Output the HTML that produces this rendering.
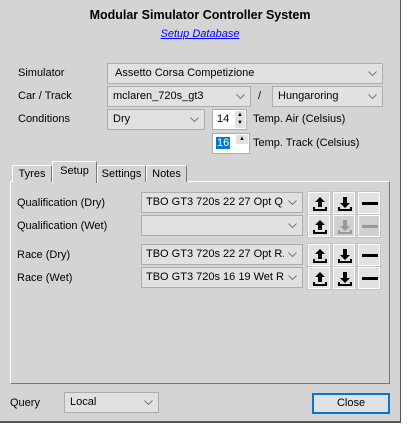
<!DOCTYPE html>
<html><head><style>
body{margin:0;width:407px;height:424px;background:#fff;font-family:"Liberation Sans",Arial,sans-serif;font-size:11px;color:#000;position:relative;overflow:hidden}
.win{position:absolute;left:0;top:0;width:400px;height:421px;background:#d4d4d4;border-right:1px solid #555;border-bottom:2px solid #555}
.a{position:absolute}
.cb{position:absolute;background:#e1e1e1;border:1px solid #adadad;box-sizing:border-box;padding-left:6px;line-height:19px;white-space:nowrap;overflow:hidden}
.cb .t{position:absolute;left:4px;right:18px;top:0;overflow:hidden}
.cb svg{position:absolute;right:5px;top:7px}
.lbl{position:absolute;white-space:nowrap}
.btn{position:absolute;width:22px;height:22px;background:#e1e1e1;border:1px solid #fff;box-sizing:border-box;outline:1px solid #c4c4c4}
.tab{position:absolute;top:163px;height:19px;background:#d4d4d4;border:1px solid #fff;border-right-color:#777;border-bottom:none;box-sizing:border-box;line-height:17px;text-align:center}
</style></head><body>
<svg width="0" height="0" style="position:absolute"><defs>
<g id="ch"><path d="M0.5 0.5l4 4 4-4" fill="none" stroke="#777" stroke-width="1"/></g>
<g id="up"><path d="M5 14v3h12v-3" fill="none" stroke="currentColor" stroke-width="2"/><path d="M11 4l-5 5h3v5h4V9h3z" fill="currentColor"/></g>
<g id="dn"><path d="M5 14v3h12v-3" fill="none" stroke="currentColor" stroke-width="2"/><path d="M11 15l-5-5h3V4h4v6h3z" fill="currentColor"/></g>
<g id="mi"><rect x="3" y="9" width="16" height="3" fill="currentColor"/></g>
</defs></svg>
<div class="win">
<div class="lbl" style="left:0;width:400px;text-align:center;top:8px;font-weight:bold;font-size:12.5px">Modular Simulator Controller System</div>
<div class="lbl" style="left:0;width:400px;text-align:center;top:28px;color:#00f;font-style:italic;text-decoration:underline">Setup Database</div>

<div class="lbl" style="left:18px;top:67px">Simulator</div>
<div class="cb" style="left:107px;top:63px;width:276px;height:21px"><span class="t" style="left:7px">Assetto Corsa Competizione</span><svg width="9" height="6"><use href="#ch"/></svg></div>
<div class="lbl" style="left:18px;top:90px">Car / Track</div>
<div class="cb" style="left:107px;top:86px;width:144px;height:21px"><span class="t" style="left:5px">mclaren_720s_gt3</span><svg width="9" height="6"><use href="#ch"/></svg></div>
<div class="lbl" style="left:258px;top:90px">/</div>
<div class="cb" style="left:272px;top:86px;width:111px;height:21px"><span class="t" style="left:5px">Hungaroring</span><svg width="9" height="6"><use href="#ch"/></svg></div>
<div class="lbl" style="left:18px;top:113px">Conditions</div>
<div class="cb" style="left:107px;top:109px;width:98px;height:21px"><span class="t" style="left:5px">Dry</span><svg width="9" height="6"><use href="#ch"/></svg></div>
<div class="a" style="left:212px;top:109px;width:35px;height:21px;background:#fff;border:1px solid #adadad;box-sizing:border-box"><span class="a" style="left:4px;top:3px">14</span><div class="a" style="left:22px;top:1px;width:10px;height:17px;background:#e1e1e1;font-size:6px;line-height:8px;text-align:center">▲<br>▼</div></div>
<div class="lbl" style="left:253px;top:113px">Temp. Air (Celsius)</div>
<div class="a" style="left:212px;top:133px;width:38px;height:21px;background:#fff;border:1px solid #adadad;box-sizing:border-box"><span class="a" style="left:3px;top:3px;background:#0078d7;color:#fff;padding:0 1px">16</span><div class="a" style="left:23px;top:1px;width:12px;height:9px;background:#e1e1e1;font-size:6px;line-height:9px;text-align:center">▲</div></div>
<div class="lbl" style="left:253px;top:137px">Temp. Track (Celsius)</div>

<div class="a" style="left:10px;top:181px;width:380px;height:203px;border:1px solid #fff;border-right-color:#777;border-bottom-color:#777;box-sizing:border-box"></div>
<div class="tab" style="left:12px;width:40px;top:165px;height:17px">Tyres</div>
<div class="tab" style="left:97px;width:49px;top:165px;height:17px">Settings</div>
<div class="tab" style="left:146px;width:41px;top:165px;height:17px">Notes</div>
<div class="tab" style="left:52px;width:45px;top:161px;height:22px;line-height:19px;z-index:2">Setup</div>

<div class="lbl" style="left:17px;top:197px">Qualification (Dry)</div>
<div class="cb" style="left:141px;top:192px;width:162px;height:21px"><span class="t">TBO GT3 720s 22 27 Opt Q.json</span><svg width="9" height="6"><use href="#ch"/></svg></div>
<div class="lbl" style="left:17px;top:220px">Qualification (Wet)</div>
<div class="cb" style="left:141px;top:215px;width:162px;height:21px"><svg width="9" height="6"><use href="#ch"/></svg></div>
<div class="lbl" style="left:17px;top:249px">Race (Dry)</div>
<div class="cb" style="left:141px;top:244px;width:162px;height:21px"><span class="t">TBO GT3 720s 22 27 Opt R.json</span><svg width="9" height="6"><use href="#ch"/></svg></div>
<div class="lbl" style="left:17px;top:272px">Race (Wet)</div>
<div class="cb" style="left:141px;top:267px;width:162px;height:21px"><span class="t">TBO GT3 720s 16 19 Wet R.json</span><svg width="9" height="6"><use href="#ch"/></svg></div>

<div class="btn" style="left:308px;top:192px"><svg width="20" height="20"><use href="#up"/></svg></div>
<div class="btn" style="left:333px;top:192px"><svg width="20" height="20"><use href="#dn"/></svg></div>
<div class="btn" style="left:358px;top:192px"><svg width="20" height="20"><use href="#mi"/></svg></div>
<div class="btn" style="left:308px;top:215px"><svg width="20" height="20"><use href="#up"/></svg></div>
<div class="btn" style="left:333px;top:215px;background:#d0d0d0;color:#999"><svg width="20" height="20"><use href="#dn"/></svg></div>
<div class="btn" style="left:358px;top:215px;background:#d0d0d0;color:#999"><svg width="20" height="20"><use href="#mi"/></svg></div>
<div class="btn" style="left:308px;top:244px"><svg width="20" height="20"><use href="#up"/></svg></div>
<div class="btn" style="left:333px;top:244px"><svg width="20" height="20"><use href="#dn"/></svg></div>
<div class="btn" style="left:358px;top:244px"><svg width="20" height="20"><use href="#mi"/></svg></div>
<div class="btn" style="left:308px;top:267px"><svg width="20" height="20"><use href="#up"/></svg></div>
<div class="btn" style="left:333px;top:267px"><svg width="20" height="20"><use href="#dn"/></svg></div>
<div class="btn" style="left:358px;top:267px"><svg width="20" height="20"><use href="#mi"/></svg></div>

<div class="lbl" style="left:10px;top:397px">Query</div>
<div class="cb" style="left:64px;top:392px;width:95px;height:21px"><span class="t" style="left:5px">Local</span><svg width="9" height="6"><use href="#ch"/></svg></div>
<div class="a" style="left:312px;top:393px;width:78px;height:21px;background:#e1e1e1;border:2px solid #0078d7;box-sizing:border-box;text-align:center;line-height:17px">Close</div>
</div>
</body></html>
